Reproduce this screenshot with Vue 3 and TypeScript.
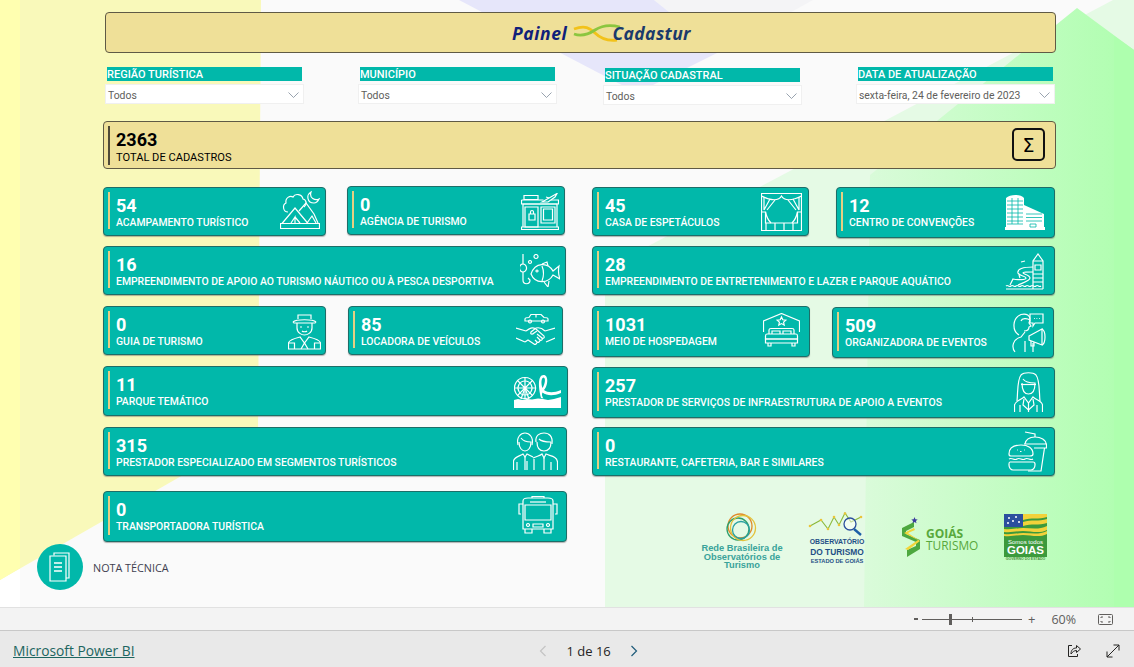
<script setup lang="ts">
type Shape = { w: number; h: number; paths: string[]; fills?: string[]; cuts?: string[] };
type Tile = {
  value: string;
  label: string;
  width: number;
  left: number;
  top: number;
  height: number;
  icon: string;
  iconTop: number;
  iconRight: number;
};

const filters = [
  { title: "REGIÃO TURÍSTICA", value: "Todos", left: 0, top: 0 },
  { title: "MUNICÍPIO", value: "Todos", left: 54, top: 0 },
  { title: "SITUAÇÃO CADASTRAL", value: "Todos", left: 46, top: 1 },
  { title: "DATA DE ATUALIZAÇÃO", value: "sexta-feira, 24 de fevereiro de 2023", left: 54, top: 0 }
];

const icons: Record<string, Shape> = {
  camp: {
    w: 40, h: 40,
    paths: [
      "M.5 33.5h39v5H.5z",
      "M2 33.5 15 18l13 15.5",
      "M19 21l7-8 8 11 4 9",
      "M15 33v-6l-4 6M15 27l5 6",
      "M27 33l5-7 4 7",
      "M8 22C3 22 2 15 6 13 5 8 10 5 13 7c2-4 9-3 10 2 4 1 4 6 1 8",
      "M31 2c-5 3-4 11 3 11 3 0 4-2 5-4-4 2-10-1-8-7z"
    ]
  },
  agency: {
    w: 38, h: 37,
    paths: [
      "M.5 34h37v2.5H.5z",
      "M2 34V11h34v23",
      "M.5 7h22M.5 7v4h37V7H30",
      "M3 2.5h14v4H3z",
      "M4 14h13v20H4z",
      "M20 14h14v16H20z",
      "M22.5 16h9v11h-9z",
      "M8 21h6v6H8zM9.5 21v-2a1.5 1.5 0 0 1 3 0v2",
      "M21 9 36 .5l-2 3.5L27 9z",
      "M25 4l3 1"
    ]
  },
  stage: {
    w: 41, h: 38,
    paths: [
      "M.5.5h40v37H.5z",
      "M.5 3c9.5 5 17.5 5 20 0 2.5 5 10.5 5 20 0",
      "M3 4v13M9 6 3 17M14 7 6 17",
      "M38 4v13M32 6l6 11M27 7l8 10",
      "M.5 19h4v11h32V19h4",
      "M4.5 19c1.5 7 3.5 9 5.5 11M36.5 19c-1.5 7-3.5 9-5.5 11",
      "M5 30v7M14 30v7M23 30v7M32 30v7"
    ]
  },
  center: {
    w: 40, h: 36,
    paths: [],
    fills: ["M1 33V4c4-4 15-4 18 0v7l20 9v13zM0 33h40v3H0z"],
    cuts: [
      "M2 7h16M2 11h16M2 15h16M2 19h16M2 23h16M2 27h16M2 30h16",
      "M7 4v26M13 4v26",
      "M21 20h16M21 23.5h16M21 27h16",
      "M25 30h6v3h-6z"
    ]
  },
  fish: {
    w: 40, h: 33,
    paths: [
      "M3 0v10M3 18v8c0 5 7 5 7 0l-2-2",
      "M3 10a3.5 4 0 1 0 .01 0",
      "M11 20C15 8 28 8 33 17l6-5c-1 5-1 8 1 13l-7-4c-5 9-18 9-22-1z",
      "M22 12c2 5 2 10 0 15",
      "M22 10l5-2 1 4",
      "M24 28l4 5 1-6",
      "M17 16a1 1 0 1 0 .01 0",
      "M10 6.5a1.5 1.5 0 1 0 .01 0",
      "M16 .5a2 2 0 1 0 .01 0"
    ]
  },
  slide: {
    w: 39, h: 37,
    paths: [
      "M28 36V8l5-7 5 7v28",
      "M28 8h10M30 12h6v5h-6z",
      "M28 21h10M28 25h10M28 29h10",
      "M1 33c2-2 3 2 5 0s3 2 5 0 3 2 5 0 3 2 5 0 3 2 5 0 3 2 5 0 3 2 5 0",
      "M1 36h37",
      "M28 14C18 14 12 16 13 20c1 3 8 3 8 5s-8 2-13 1l-3 6",
      "M28 19c-6 0-10 0-10 1s7 2 7 5-8 5-12 7",
      "M16 9l4-1M14 22l1 3"
    ]
  },
  guide: {
    w: 33, h: 37,
    paths: [
      "M10 6V2h13v4",
      "M5 9c3-3 20-3 23 0M5 9l1 1h21l1-1",
      "M9 10v5c0 5 5 7 7.5 7S24 20 24 15v-5",
      "M12 14h2M19 14h2M14 18c1 1 4 1 5 0",
      "M.5 36v-6c.5-3 7.5-5 11.5-6l4.5 6 4.5-6c4 1 11 3 11.5 6v6z",
      "M.5 30h6v6M32.5 30h-6v6",
      "M13 36l3.5-6 3.5 6"
    ]
  },
  deal: {
    w: 39, h: 35,
    paths: [
      "M9 7V5c0-1 2-1.5 4-1.5L15 .5h10l3 3c2 0 4 .5 4 1.5v2z",
      "M20 .5v3",
      "M14 6a1.5 1.5 0 1 0 .01 0M27 6a1.5 1.5 0 1 0 .01 0",
      "M0 14l10 3M39 14l-10 3M0 24l9 4M39 24l-9 4",
      "M10 17c4-3 6-4 10-2l8 7c1 2-1 3-2 2l-5-4",
      "M26 24c1 2-1 3-2 2l-3-3M24 26c0 2-2 3-3 2l-2-2M21 28c0 2-2 3-3 2l-6-4-3 2",
      "M29 17c-3-3-5-4-9-3l-5 4c-1 2 1 3 3 1l3-2"
    ]
  },
  bed: {
    w: 37, h: 36,
    paths: [
      "M.5 19V8l18-7.5L36.5 8v11",
      "M18.5 4l1.3 2.8 3 .3-2.2 2 .6 3-2.7-1.5-2.7 1.5.6-3-2.2-2 3-.3z",
      "M6 21v-4c0-1 1-1.5 2-1.5h21c1 0 2 .5 2 1.5v4",
      "M9 21v-3h8v3M20 21v-3h8v3",
      "M4 21h29c1 0 1.5 1 1.5 2v3h-32v-3c0-1 .5-2 1.5-2z",
      "M2.5 26h32v4h-32z",
      "M5 30v3h3v-3M29 30v3h3v-3"
    ]
  },
  speaker: {
    w: 38, h: 40,
    paths: [
      "M10 22C3 18 3 5 12 1.5 18 0 21 3 21 6",
      "M12 8c1-3 6-3 9-1l-1 3 2 3-2 1c0 3-2 4-5 4",
      "M6 39c-4-5-2-13 6-15l4-5",
      "M16 28v11M24 39V30",
      "M21 1h13v9h-8l-2 3v-3h-3z",
      "M25 5.5h.8M27.5 5.5h.8M30 5.5h.8",
      "M20 23l13-7v16l-13-5z",
      "M33 16c4 2 4 14 0 16",
      "M22 28v5h3v-4"
    ]
  },
  park: {
    w: 47, h: 33,
    paths: [
      "M11 2.5a10.5 10.5 0 1 0 .01 0",
      "M11 6a7 7 0 1 0 .01 0",
      "M11 2v22M.5 13h21M3.5 5.5l15 15M18.5 5.5l-15 15",
      "M7 24l4-11 4 11"
    ],
    fills: [
      "M0 25l4-1 4 1 5-1 5 .5 6-1 5 .5 5 1 6-1 7-2v12H0z",
      "M27 23C24 11 24 0 29.5 0 35 0 34 11 30 15c4 3 10 3 17 0v3c-7 3-14 3-18.5-.5-1 2-.5 4 1 6zM29.5 2.5C27 3 27 9 28.5 13 31 9 32 3 29.5 2.5z"
    ]
  },
  team: {
    w: 45, h: 38,
    paths: [
      "M5 13C3 5 8 1 12 1s9 4 7 12",
      "M6 10c0 6 3 9 6 9s6-3 6-9c-4 0-8-1-10-4",
      "M.5 38v-9c.5-4 6.5-5 9.5-7l2 3 2-3c2 1 4 2 6 3",
      "M4 38v-8M14 38V29M12 25v13",
      "M23 10c-1-7 4-9 8-9 5 0 9 3 8 11",
      "M24 10c0 6 3 9 7 9s7-3 7-9c-5 0-10-1-12-3",
      "M20 26c4-2 7-2 9-4l2 4 2-4c4 2 11 2 11.5 8v8",
      "M31 26v12M38 38v-8M21 38V27"
    ]
  },
  bus: {
    w: 40, h: 39,
    paths: [
      "M5 5c0-2 2-3 5-3h20c3 0 5 1 5 3v28H5z",
      "M14 2V.5h12V2",
      "M7 9h26v15H7z",
      "M5 8H1v10h2M35 8h4v10h-2",
      "M15 28h10v3H15z",
      "M10 27.5a1.5 1.5 0 1 0 .01 0M30 27.5a1.5 1.5 0 1 0 .01 0",
      "M7 33v4h7v-4M26 33v4h7v-4",
      "M12 6h16"
    ]
  },
  lady: {
    w: 29, h: 40,
    paths: [
      "M3 29C4 20 3 8 7 3c3-3 12-3 15 0 4 5 3 17 4 26",
      "M8 11c0 8 3 11 6.5 11S21 19 21 11c-4 0-10-1-12-4",
      "M7 12.5h15",
      "M.5 40v-7c.5-4 6.5-5 9.5-8l4.5 6 4.5-6c3 3 9 4 9.5 8v7",
      "M6 40v-7M23 40v-7",
      "M10 27l-1 6 5.5 5 5.5-5-1-6",
      "M14.5 31v9"
    ]
  },
  food: {
    w: 39, h: 41,
    paths: [
      "M17 13c1-6 7-7 10-7 6 0 11 3 11 7",
      "M16 13h22.5v4H26",
      "M17 1l10 2v3",
      "M36.5 17 33 40H20",
      "M1 23c0-7 5-9 12-9s12 3 12 9c0 2-2 2-3 2H3c-1 0-2 0-2-2z",
      "M9 19h.8M16 19h.8M12 20.5h1.5",
      "M1 28c3-2 5 2 8 0s5 2 8 0 5 2 8 0",
      "M2 31h23c1 0 2 1 2 2v1c0 3-2 5-4 5H5c-2 0-4-2-4-5v-1c0-1 0-2 1-2z"
    ]
  }
};

const rows: Tile[][][] = [
  [
    [
      { value: "54", label: "ACAMPAMENTO TURÍSTICO", width: 223, left: 0, top: 1, height: 49, icon: "camp", iconTop: 2, iconRight: 5 },
      { value: "0", label: "AGÊNCIA DE TURISMO", width: 218, left: 21, top: 0, height: 49, icon: "agency", iconTop: 6, iconRight: 5 }
    ],
    [
      { value: "45", label: "CASA DE ESPETÁCULOS", width: 217, left: 0, top: 1, height: 49, icon: "stage", iconTop: 5, iconRight: 6 },
      { value: "12", label: "CENTRO DE CONVENÇÕES", width: 219, left: 27, top: 1, height: 51, icon: "center", iconTop: 6, iconRight: 9 }
    ]
  ],
  [
    [{ value: "16", label: "EMPREENDIMENTO DE APOIO AO TURISMO NÁUTICO OU À PESCA DESPORTIVA", width: 463, left: 0, top: 0, height: 49, icon: "fish", iconTop: 7, iconRight: 5 }],
    [{ value: "28", label: "EMPREENDIMENTO DE ENTRETENIMENTO E LAZER E PARQUE AQUÁTICO", width: 463, left: 0, top: 0, height: 49, icon: "slide", iconTop: 6, iconRight: 10 }]
  ],
  [
    [
      { value: "0", label: "GUIA DE TURISMO", width: 223, left: 0, top: 0, height: 49, icon: "guide", iconTop: 6, iconRight: 4 },
      { value: "85", label: "LOCADORA DE VEÍCULOS", width: 215, left: 22, top: 0, height: 49, icon: "deal", iconTop: 7, iconRight: 7 }
    ],
    [
      { value: "1031", label: "MEIO DE HOSPEDAGEM", width: 218, left: 0, top: 0, height: 51, icon: "bed", iconTop: 6, iconRight: 9 },
      { value: "509", label: "ORGANIZADORA DE EVENTOS", width: 222, left: 22, top: 1, height: 51, icon: "speaker", iconTop: 5, iconRight: 6 }
    ]
  ],
  [
    [{ value: "11", label: "PARQUE TEMÁTICO", width: 465, left: 0, top: 0, height: 50, icon: "park", iconTop: 8, iconRight: 6 }],
    [{ value: "257", label: "PRESTADOR DE SERVIÇOS DE INFRAESTRUTURA DE APOIO A EVENTOS", width: 463, left: 0, top: 1, height: 51, icon: "lady", iconTop: 4, iconRight: 11 }]
  ],
  [
    [{ value: "315", label: "PRESTADOR ESPECIALIZADO EM SEGMENTOS TURÍSTICOS", width: 464, left: 0, top: 0, height: 49, icon: "team", iconTop: 4, iconRight: 8 }],
    [{ value: "0", label: "RESTAURANTE, CAFETERIA, BAR E SIMILARES", width: 463, left: 0, top: 0, height: 49, icon: "food", iconTop: 3, iconRight: 7 }]
  ]
];

const lastRow: Tile = { value: "0", label: "TRANSPORTADORA TURÍSTICA", width: 464, left: 0, top: 0, height: 51, icon: "bus", iconTop: 4, iconRight: 8 };
</script>

<template>
  <div class="app">
    <main class="report">
      <svg class="backdrop" width="1134" height="607" viewBox="0 0 1134 607" aria-hidden="true">
        <defs>
          <linearGradient id="greenFade" x1="864" x2="1114" y1="0" y2="0" gradientUnits="userSpaceOnUse">
            <stop offset="0" stop-color="#dafbda" />
            <stop offset="1" stop-color="#b2feb2" />
          </linearGradient>
        </defs>
        <polygon points="0,560 20,548 20,607 0,607" fill="#ffffff" />
        <polygon points="0,0 261,0 258,432 0,580" fill="#f9f9ba" />
        <polygon points="0,0 20,0 20,568 0,580" fill="#ffffb0" />
        <polygon points="654,0 813,0 719,52" fill="#f4f4f6" />
        <polygon points="459,0 654,0 719,52 637,93" fill="#e6e6fa" />
        <polygon points="1113,0 1134,0 1134,607 605,607 605,269" fill="#e5fae5" />
        <polygon points="864,607 870,175 1077,8 1134,50 1134,607" fill="url(#greenFade)" />
        <polygon points="1114,36 1134,50 1134,607 1114,607" fill="#aeffae" />
      </svg>

      <div class="canvas">
        <header class="banner">
          <span class="brand brand-a">Painel</span>
          <svg class="ribbon" width="48" height="18" viewBox="0 0 48 18">
            <path d="M1 5C12 1 17 4 22 9s13 8 22 7" fill="none" stroke="#f2c21a" stroke-width="2.8" />
            <path d="M1 10c8 3 15 0 21-4S36 0 47 3" fill="none" stroke="#8cc63f" stroke-width="2.8" />
          </svg>
          <span class="brand brand-b">Cadastur</span>
        </header>

        <section class="filters">
          <div
            v-for="f in filters"
            :key="f.title"
            class="filter"
            :style="{ marginLeft: f.left + 'px', marginTop: f.top + 'px' }"
          >
            <div class="filter-title">{{ f.title }}</div>
            <div class="filter-box">
              <span>{{ f.value }}</span>
              <svg width="11" height="6" viewBox="0 0 11 6"><path d="M.5.5l5 5 5-5" fill="none" stroke="#7f8c9a" stroke-width=".8" /></svg>
            </div>
          </div>
        </section>

        <section class="total">
          <i class="accent dark"></i>
          <div class="total-text">
            <div class="total-value">2363</div>
            <div class="total-label">TOTAL DE CADASTROS</div>
          </div>
          <div class="sigma">Σ</div>
        </section>

        <section class="board">
          <div v-for="(row, r) in rows" :key="r" class="row">
            <div v-for="(side, s) in row" :key="s" class="side">
              <article
                v-for="t in side"
                :key="t.label"
                class="tile"
                :style="{ width: t.width + 'px', height: t.height + 'px', marginLeft: t.left + 'px', marginTop: t.top + 'px' }"
              >
                <i class="accent"></i>
                <div class="tile-text">
                  <div class="tile-value">{{ t.value }}</div>
                  <div class="tile-label">{{ t.label }}</div>
                </div>
                <svg
                  class="tile-icon"
                  :width="icons[t.icon].w"
                  :height="icons[t.icon].h"
                  :viewBox="`0 0 ${icons[t.icon].w} ${icons[t.icon].h}`"
                  :style="{ marginTop: t.iconTop + 'px', marginRight: t.iconRight + 'px' }"
                >
                  <path v-for="d in icons[t.icon].fills" :key="d" :d="d" fill="#fff" fill-rule="evenodd" />
                  <path v-for="d in icons[t.icon].paths" :key="d" :d="d" fill="none" stroke="#fff" stroke-width="1.2" />
                  <path v-for="d in icons[t.icon].cuts" :key="d" :d="d" fill="none" stroke="#01b8aa" stroke-width=".8" />
                </svg>
              </article>
            </div>
          </div>

          <div class="row last">
            <div class="side">
              <article class="tile" :style="{ width: lastRow.width + 'px', height: lastRow.height + 'px' }">
                <i class="accent"></i>
                <div class="tile-text">
                  <div class="tile-value">{{ lastRow.value }}</div>
                  <div class="tile-label">{{ lastRow.label }}</div>
                </div>
                <svg
                  class="tile-icon"
                  :width="icons.bus.w"
                  :height="icons.bus.h"
                  :viewBox="`0 0 ${icons.bus.w} ${icons.bus.h}`"
                  :style="{ marginTop: lastRow.iconTop + 'px', marginRight: lastRow.iconRight + 'px' }"
                >
                  <path v-for="d in icons.bus.paths" :key="d" :d="d" fill="none" stroke="#fff" stroke-width="1.2" />
                </svg>
              </article>
            </div>

            <div class="logos">
              <svg class="logo-rede" width="86" height="60" viewBox="0 0 86 60">
                <g fill="none" stroke-width="1.3">
                  <circle cx="40" cy="14" r="12" stroke="#e08a2b" />
                  <circle cx="38" cy="17" r="11" stroke="#2f9e6b" />
                  <circle cx="43" cy="16" r="12.5" stroke="#e3c23a" />
                  <circle cx="41" cy="18" r="8.5" stroke="#2aa0a0" />
                </g>
                <g class="rede-text">
                  <text x="42" y="39">Rede Brasileira de</text>
                  <text x="42" y="47.5">Observatórios de</text>
                  <text x="42" y="56">Turismo</text>
                </g>
              </svg>
              <svg class="logo-obs" width="60" height="58" viewBox="0 0 60 58">
                <path d="M5 14 16 8l7 9 6-12 5 8 6-12 6 9 10-5" fill="none" stroke="#8bb83a" stroke-width="1.1" />
                <g fill="#e9c53a">
                  <circle cx="5" cy="14" r="1.3" /><circle cx="16" cy="8" r="1.3" /><circle cx="23" cy="17" r="1.3" /><circle cx="29" cy="5" r="1.3" />
                  <circle cx="34" cy="13" r="1.3" /><circle cx="40" cy="1.5" r="1.3" /><circle cx="56" cy="5" r="1.3" />
                </g>
                <circle cx="45" cy="12" r="6" fill="#fff" fill-opacity=".5" stroke="#2b4f9e" stroke-width="1.3" />
                <path d="M49 17l7 6" stroke="#1c5fa8" stroke-width="2.4" />
                <text x="32" y="32" class="obs-a">OBSERVATÓRIO</text>
                <text x="32" y="43" class="obs-b">DO TURISMO</text>
                <text x="32" y="51" class="obs-c">ESTADO DE GOIÁS</text>
              </svg>
              <svg class="logo-goias" width="80" height="42" viewBox="0 0 80 42">
                <path d="M15 5 3 11v8l14 6v4L8 33v7l13-8v-9L7 17v-3l8-4z" fill="#4da83f" />
                <path d="M15 11 5 16l14 7-13 9 3 1 12-9L9 16l7-3z" fill="#f2d53a" />
                <path d="M15.5 0l.9 2.2 2.3.2-1.8 1.5.6 2.3-2-1.3-2 1.3.6-2.3-1.800-1.500 2.300-.2z" fill="#3c3c9e" />
                <text x="27" y="21" class="goias-a">GOIÁS</text>
                <text x="27" y="33" class="goias-b">TURISMO</text>
              </svg>
              <svg class="logo-flag" width="45" height="46" viewBox="0 0 45 46">
                <rect x="1" y="0" width="43" height="43" fill="#3c9a3c" />
                <path d="M20 0h24v3c-8 3-16 0-24 3zM20 8c8-3 16 0 24-3v4c-8 3-16 0-24 3zM1 15c8 1 13-1 19-1 8 0 16 2 24-2v4c-8 4-16 1-24 1-6 0-12 2-19 1zM1 20c8 1 13-1 19-1 8 0 16 2 24-2v3c-8 4-16 1-24 1-6 0-12 2-19 1z" fill="#f2d23a" />
                <rect x="1" y="0" width="19" height="13" fill="#2b4f9e" />
                <g fill="#fff">
                  <circle cx="6" cy="4" r="1" /><circle cx="13" cy="3" r="1" /><circle cx="10" cy="7" r="1" /><circle cx="16" cy="8" r="1" /><circle cx="5" cy="9" r="1" />
                </g>
                <text x="22.5" y="30" class="flag-a">Somos todos</text>
                <text x="22.5" y="39.5" class="flag-b">GOIAS</text>
                <text x="22.5" y="46" class="flag-c">GOVERNO DO ESTADO</text>
              </svg>
            </div>
          </div>
        </section>

        <div class="note">
          <div class="note-icon">
            <svg width="26" height="30" viewBox="0 0 26 30" fill="none" stroke="#fff" stroke-width="1.2">
              <path d="M7 3.5V1h15v25h-3" />
              <path d="M3 4h16v25H3z" />
              <path d="M7 11h8M7 15h8M7 19h8" stroke-width="1.5" />
            </svg>
          </div>
          <span>NOTA TÉCNICA</span>
        </div>
      </div>
    </main>

    <div class="zoombar">
      <span class="zoom-minus"></span>
      <div class="zoom-track">
        <i class="zoom-thumb"></i>
        <i class="zoom-tick"></i>
      </div>
      <span class="zoom-plus">+</span>
      <span class="zoom-pct">60%</span>
      <svg class="zoom-fit" width="15" height="11" viewBox="0 0 15 11" fill="none" stroke="#605e5c">
        <rect x=".5" y=".5" width="14" height="10" rx="1" />
        <path d="M3 4V3h2M10 3h2v1M3 7v1h2M10 8h2V7" />
      </svg>
    </div>

    <footer class="footer">
      <a class="pbi-link">Microsoft Power BI</a>
      <div class="pager">
        <svg width="10" height="12" viewBox="0 0 10 12"><path d="M7.5 1l-5 5 5 5" fill="none" stroke="#c4c4c4" stroke-width="1.2" /></svg>
        <span>1 de 16</span>
        <svg width="10" height="12" viewBox="0 0 10 12"><path d="M2.5 1l5 5-5 5" fill="none" stroke="#1f5c7a" stroke-width="1.2" /></svg>
      </div>
      <div class="actions">
        <svg width="14" height="14" viewBox="0 0 14 14" fill="none" stroke="#252423">
          <path d="M5 1.5H1.5v11h9V10" />
          <path d="M4 10c0-4 2-6 5.5-6V1.500L13.500 5l-4 3.500V6.500C7 6.500 5.500 8 4 10z" />
        </svg>
        <svg width="14" height="14" viewBox="0 0 14 14" fill="none" stroke="#252423">
          <path d="M1 13 13 1M7.5 1H13v5.5M1 7.5V13h5.5" />
        </svg>
      </div>
    </footer>
  </div>
</template>

<style scoped>
.app {
  width: 1134px;
  height: 667px;
  overflow: hidden;
  font-family: Roboto, "Liberation Sans", sans-serif;
}

.report {
  position: relative;
  height: 607px;
  background: #fafafa;
  overflow: hidden;
}

.backdrop {
  position: absolute;
  top: 0;
  left: 0;
}

.canvas {
  position: relative;
  padding-top: 12px;
}

.banner {
  display: flex;
  align-items: center;
  box-sizing: border-box;
  width: 951px;
  height: 41px;
  margin-left: 105px;
  padding: 0 0 0 406px;
  background: #efe098;
  border: 1px solid #5f5a45;
  border-radius: 4px;
}

.brand {
  font-family: "Open Sans", sans-serif;
  font-style: italic;
  font-weight: 700;
  line-height: 20px;
}

.brand-a {
  color: #10207a;
  font-size: 17.5px;
  letter-spacing: 0.6px;
}

.brand-b {
  margin-left: -9px;
  color: #1b3a6b;
  font-size: 17.5px;
  letter-spacing: 0.4px;
}

.ribbon {
  margin-left: 6px;
}

.filters {
  display: flex;
  margin: 14px 0 0 105px;
  height: 39px;
}

.filter {
  width: 199px;
}

.filter-title {
  width: 195px;
  height: 14px;
  margin-left: 2px;
  background: #01b8aa;
  color: #fff;
  font-size: 11px;
  font-weight: 500;
  line-height: 15px;
  white-space: nowrap;
}

.filter-box {
  display: flex;
  align-items: center;
  justify-content: space-between;
  box-sizing: border-box;
  height: 20px;
  margin-top: 3px;
  padding: 2px 4px 0 2px;
  background: #fff;
  border: 1px solid #f0f0f0;
  color: #605e5c;
  font-size: 10.4px;
  white-space: nowrap;
}

.total {
  display: flex;
  box-sizing: border-box;
  width: 953px;
  height: 48px;
  margin: 15px 0 0 103px;
  padding-left: 4px;
  background: #efe098;
  border: 1px solid #5f5a45;
  border-radius: 4px;
}

.accent {
  flex: none;
  width: 2px;
  height: calc(100% - 10px);
  margin-top: 4px;
  background: #e6cf82;
}

.accent.dark {
  height: 39px;
  background: #4f4a38;
}

.total-text {
  margin: 4px 0 0 6px;
  color: #000;
}

.total-value {
  margin-top: 4px;
  font-size: 18px;
  font-weight: 700;
  line-height: 20px;
}

.total-label {
  margin-top: 1px;
  font-size: 11.1px;
  line-height: 13px;
  white-space: nowrap;
}

.sigma {
  display: flex;
  align-items: center;
  justify-content: center;
  box-sizing: border-box;
  width: 33px;
  height: 33px;
  margin: 6px 10px 0 auto;
  border: 2px solid #111;
  border-radius: 5px;
  color: #000;
  font-family: "DejaVu Sans", sans-serif;
  font-size: 19px;
}

.board {
  margin: 17px 0 0 103px;
}

.row {
  display: flex;
  height: 60px;
}

.row:nth-child(4) {
  height: 61px;
}

.row:nth-child(5) {
  height: 64px;
}

.row.last {
  height: 54px;
}

.side {
  display: flex;
  align-items: flex-start;
  width: 489px;
}

.tile {
  display: flex;
  flex: none;
  align-items: flex-start;
  box-sizing: border-box;
  padding-left: 4px;
  background: #01b8aa;
  border: 1px solid #1d6e68;
  border-radius: 4px;
  box-shadow: 0 1px 1px rgba(90, 90, 90, 0.45);
  color: #fff;
}

.tile-text {
  min-width: 0;
  margin: 4px 0 0 6px;
}

.tile-value {
  margin-top: 4px;
  font-size: 18px;
  font-weight: 700;
  line-height: 20px;
}

.tile-label {
  margin-top: 1px;
  font-size: 10.42px;
  font-weight: 500;
  line-height: 12px;
  white-space: nowrap;
}

.tile-icon {
  flex: none;
  margin-left: auto;
}

.logos {
  display: flex;
  align-items: flex-start;
  height: 60px;
  margin: 19px 0 0 108px;
}

.logo-rede {
  margin-top: 2px;
}

.rede-text text {
  fill: #3aa39a;
  font-family: "Liberation Sans", sans-serif;
  font-size: 9.3px;
  font-weight: 700;
  text-anchor: middle;
}

.logo-obs {
  margin: 2px 0 0 19px;
}

.obs-a,
.obs-b,
.obs-c {
  fill: #1f4f86;
  font-family: "Liberation Sans", sans-serif;
  font-weight: 700;
  text-anchor: middle;
}

.obs-a {
  font-size: 6.9px;
}

.obs-b {
  font-size: 8.4px;
}

.obs-c {
  font-size: 5.7px;
}

.logo-goias {
  margin: 7px 0 0 34px;
}

.goias-a {
  fill: #58a83c;
  font-family: "Open Sans", sans-serif;
  font-size: 12px;
  font-weight: 700;
}

.goias-b {
  fill: #58a83c;
  font-family: "Open Sans", sans-serif;
  font-size: 11.9px;
}

.logo-flag {
  margin: 4px 0 0 24px;
}

.flag-a,
.flag-b,
.flag-c {
  fill: #fff;
  font-family: "Liberation Sans", sans-serif;
  text-anchor: middle;
}

.flag-a {
  font-size: 6px;
}

.flag-b {
  font-size: 11.5px;
  font-weight: 700;
}

.flag-c {
  fill: #4b8f3c;
  font-size: 3.5px;
  font-weight: 700;
}

.note {
  display: flex;
  align-items: center;
  gap: 10px;
  margin: -1px 0 0 37px;
  color: #3f3f50;
  font-family: "Open Sans", sans-serif;
  font-size: 10.8px;
}

.note-icon {
  display: flex;
  align-items: center;
  justify-content: center;
  width: 46px;
  height: 46px;
  background: #01b8aa;
  border-radius: 50%;
}

.zoombar {
  display: flex;
  align-items: center;
  box-sizing: border-box;
  height: 23px;
  padding-left: 914px;
  background: #f3f3f3;
  border-top: 1px solid #e1e1e1;
  color: #605e5c;
  font-family: "Open Sans", sans-serif;
}

.zoom-minus {
  width: 4px;
  height: 2px;
  background: #605e5c;
}

.zoom-track {
  position: relative;
  width: 100px;
  height: 1px;
  margin-left: 4px;
  background: #605e5c;
}

.zoom-thumb {
  position: absolute;
  top: -5px;
  left: 27px;
  width: 3px;
  height: 11px;
  background: #605e5c;
}

.zoom-tick {
  position: absolute;
  top: -2px;
  left: 50px;
  width: 1px;
  height: 5px;
  background: #605e5c;
}

.zoom-plus {
  margin-left: 6px;
  font-size: 13px;
  line-height: 14px;
}

.zoom-pct {
  margin-left: 16px;
  font-size: 12.5px;
}

.zoom-fit {
  margin-left: 22px;
}

.footer {
  position: relative;
  display: flex;
  align-items: center;
  box-sizing: border-box;
  height: 37px;
  padding: 3px 0 0 13px;
  background: #e9e9e9;
  border-top: 1px solid #c8c8c8;
  font-family: "Open Sans", sans-serif;
}

.pbi-link {
  color: #1c6560;
  font-size: 13.8px;
  text-decoration: underline;
}

.pager {
  display: flex;
  align-items: center;
  gap: 18px;
  margin-left: 404px;
  color: #252423;
  font-size: 13px;
  font-weight: 500;
}

.actions {
  display: flex;
  gap: 25px;
  margin-left: auto;
  padding-right: 14px;
}
</style>

<style>
html,
body {
  margin: 0;
  background: #e9e9e9;
}
</style>
